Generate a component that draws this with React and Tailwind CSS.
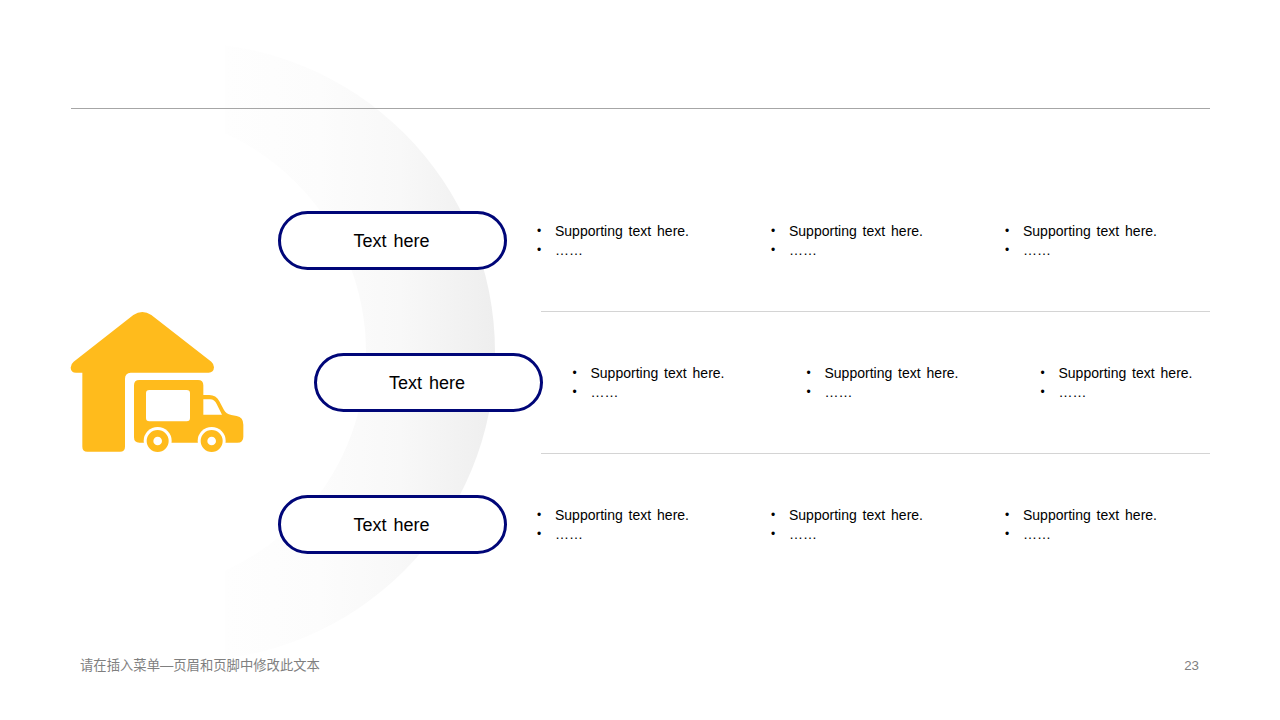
const font = "[font-family:'Liberation_Sans','Noto_Sans_CJK_SC',sans-serif]";

function Arc() {
  return (
    <svg className="absolute left-0 top-0" width="1280" height="720" viewBox="0 0 1280 720" aria-hidden="true">
      <defs>
        <linearGradient id="arcFill" gradientUnits="userSpaceOnUse" x1="225" y1="0" x2="495" y2="0">
          <stop offset="0" stopColor="#fefefe" />
          <stop offset="0.35" stopColor="#fcfcfc" />
          <stop offset="0.65" stopColor="#f8f8f8" />
          <stop offset="1" stopColor="#eeeeee" />
        </linearGradient>
        <clipPath id="arcClip">
          <rect x="225" y="0" width="400" height="720" />
        </clipPath>
      </defs>
      <path
        clipPath="url(#arcClip)"
        fill="url(#arcFill)"
        fillRule="evenodd"
        d="M186 43a309 309 0 1 1 0 618a309 309 0 1 1 0-618zM126 112a240 240 0 1 0 0 480a240 240 0 1 0 0-480z"
      />
    </svg>
  );
}

function Warehouse() {
  return (
    <svg width="220" height="180" viewBox="0 0 660 540" className="shrink-0 -ml-[21px] -mt-[4px]" aria-hidden="true">
      <path
        fill="#FFBB1C"
        d="M250 75Q277 57 304 75L484 215Q492 222 492 232Q491 248 476 248L242 248Q225 249 225 266L225 470Q225 485 210 485L112 485Q97 485 97 470L97 248L78 248Q63 248 62 233Q62 222 71 215Z"
      />
      <path
        fill="#FFBB1C"
        fillRule="evenodd"
        d="M268 270L444 270Q460 270 460 286L460 315L478 315Q498 315 508 334L522 360Q528 372 544 375L560 378Q580 382 580 404L580 440Q580 458 562 458L268 458Q252 458 252 442L252 286Q252 270 268 270ZM298 300Q288 300 288 310L288 384Q288 394 298 394L410 394Q420 394 420 384L420 310Q420 300 410 300ZM460 328L460 374L516 374L500 342Q494 328 480 328Z"
      />
      <circle cx="323" cy="453" r="42" fill="#ffffff" />
      <circle cx="485" cy="453" r="42" fill="#ffffff" />
      <circle cx="323" cy="453" r="23" fill="none" stroke="#FFBB1C" strokeWidth="20" />
      <circle cx="485" cy="453" r="23" fill="none" stroke="#FFBB1C" strokeWidth="20" />
    </svg>
  );
}

function Column() {
  return (
    <ul className="w-[234px] shrink-0 pt-[2px] text-[14px] leading-[19px] text-black [word-spacing:2px]">
      <li className="flex">
        <span className="w-[18px] shrink-0 text-[12px]">•</span>
        <span>Supporting text here.</span>
      </li>
      <li className="flex">
        <span className="w-[18px] shrink-0 text-[12px]">•</span>
        <span>……</span>
      </li>
    </ul>
  );
}

function Row({ offset, divider }) {
  return (
    <div className="relative flex h-[142px] items-center">
      <div className={`flex items-center ${offset ? "ml-[35.5px]" : ""}`}>
        <div className="mr-[30px] flex h-[59px] w-[229px] shrink-0 items-center justify-center rounded-full border-[3.5px] border-[#000678] bg-white pr-[2px] pt-[2px] text-[18px] text-black [word-spacing:2px]">
          Text here
        </div>
        <div className="flex">
          <Column />
          <Column />
          <Column />
        </div>
      </div>
      {divider && <div className="absolute -bottom-px left-[263px] right-0 h-px bg-[#d4d4d4]" />}
    </div>
  );
}

export default function App() {
  return (
    <div className={`relative h-[720px] w-[1280px] overflow-hidden bg-white ${font}`}>
      <Arc />
      <div className="relative flex h-full flex-col">
        <div className="ml-[71px] mr-[70px] mt-[108px] h-px bg-[#a6a6a6]" />
        <div className="ml-[50px] mr-[70px] mt-[60px] flex items-center">
          <div className="w-[228px] pl-[21px] shrink-0">
            <Warehouse />
          </div>
          <div className="min-w-0 flex-1">
            <Row divider />
            <Row offset divider />
            <Row />
          </div>
        </div>
        <div className="mx-[81px] mt-auto mb-[46px] flex justify-between text-[13.33px] leading-[16px] text-[#7f7f7f]">
          <span className="-ml-px">请在插入菜单—页眉和页脚中修改此文本</span>
          <span>23</span>
        </div>
      </div>
    </div>
  );
}
